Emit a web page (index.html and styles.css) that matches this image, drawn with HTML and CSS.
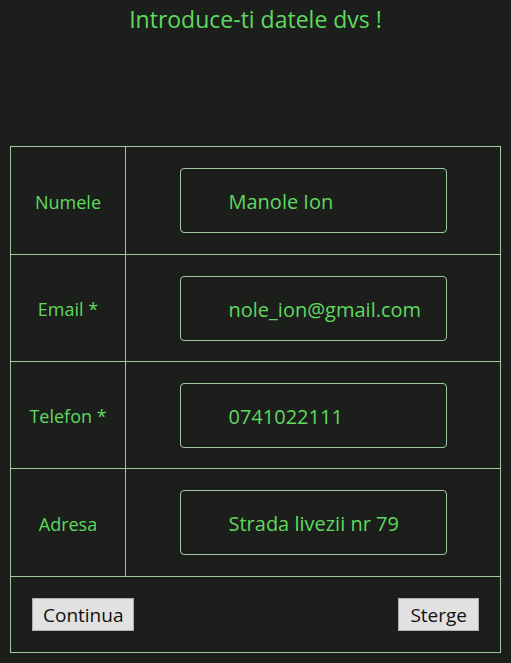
FILE: index.html
```html
<!DOCTYPE html>
<html lang="ro">
<head>
<meta charset="utf-8">
<title>Formular</title>
<link rel="stylesheet" href="styles.css">
</head>
<body>
<h1 class="title">Introduce-ti datele dvs !</h1>
<form class="form">
  <div class="label">Numele</div>
  <div class="field"><input class="input" type="text" value="Manole Ion"></div>
  <div class="label">Email *</div>
  <div class="field"><input class="input" type="text" value="nole_ion@gmail.com"></div>
  <div class="label">Telefon *</div>
  <div class="field"><input class="input" type="text" value="0741022111"></div>
  <div class="label">Adresa</div>
  <div class="field"><input class="input" type="text" value="Strada livezii nr 79"></div>
  <div class="actions">
    <button type="button" class="btn">Continua</button>
    <button type="button" class="btn">Sterge</button>
  </div>
</form>
</body>
</html>
```
FILE: styles.css
```css
html, body {
  margin: 0;
  padding: 0;
  background: #1c1e1c;
}
body {
  font-family: "Open Sans", "Noto Sans", sans-serif;
  color: #5ed95e;
  width: 511px;
  height: 663px;
  overflow: hidden;
}
.title {
  margin: 0;
  padding-top: 4px;
  height: 146px;
  box-sizing: border-box;
  text-align: center;
  font-weight: 400;
  font-size: 23px;
  line-height: 30px;
  color: #5ed95e;
}
.form {
  margin: 0 0 0 10px;
  width: 491px;
  box-sizing: border-box;
  border: 1px solid #a0cba0;
  display: grid;
  grid-template-columns: 115px 1fr;
  grid-template-rows: 108px 107px 107px 108px 75px;
}
.label {
  border-right: 1px solid #a0cba0;
  border-bottom: 1px solid #a0cba0;
  display: flex;
  align-items: center;
  justify-content: center;
  font-size: 18px;
  padding-top: 2px;
}
.field {
  border-bottom: 1px solid #a0cba0;
  display: flex;
  align-items: center;
  justify-content: center;
}
.input {
  width: 267px;
  height: 65px;
  box-sizing: border-box;
  border: 1px solid #a0cba0;
  border-radius: 4px;
  background: transparent;
  color: #5ed95e;
  font-family: "Open Sans", "Noto Sans", sans-serif;
  font-size: 20px;
  padding: 2px 4px 0 48px;
  outline: none;
}
.actions {
  grid-column: 1 / 3;
  display: flex;
  justify-content: space-between;
  align-items: flex-start;
  padding: 21px 21px 0 21px;
}
.btn {
  height: 33px;
  box-sizing: border-box;
  background: #e1e1e1;
  border: 1px solid #adadad;
  border-radius: 0;
  color: #111;
  font-family: "Open Sans", "Noto Sans", sans-serif;
  font-size: 19px;
  padding: 0 10px;
  line-height: 30px;
}
.btn + .btn {
  padding: 0 11px;
}
```
